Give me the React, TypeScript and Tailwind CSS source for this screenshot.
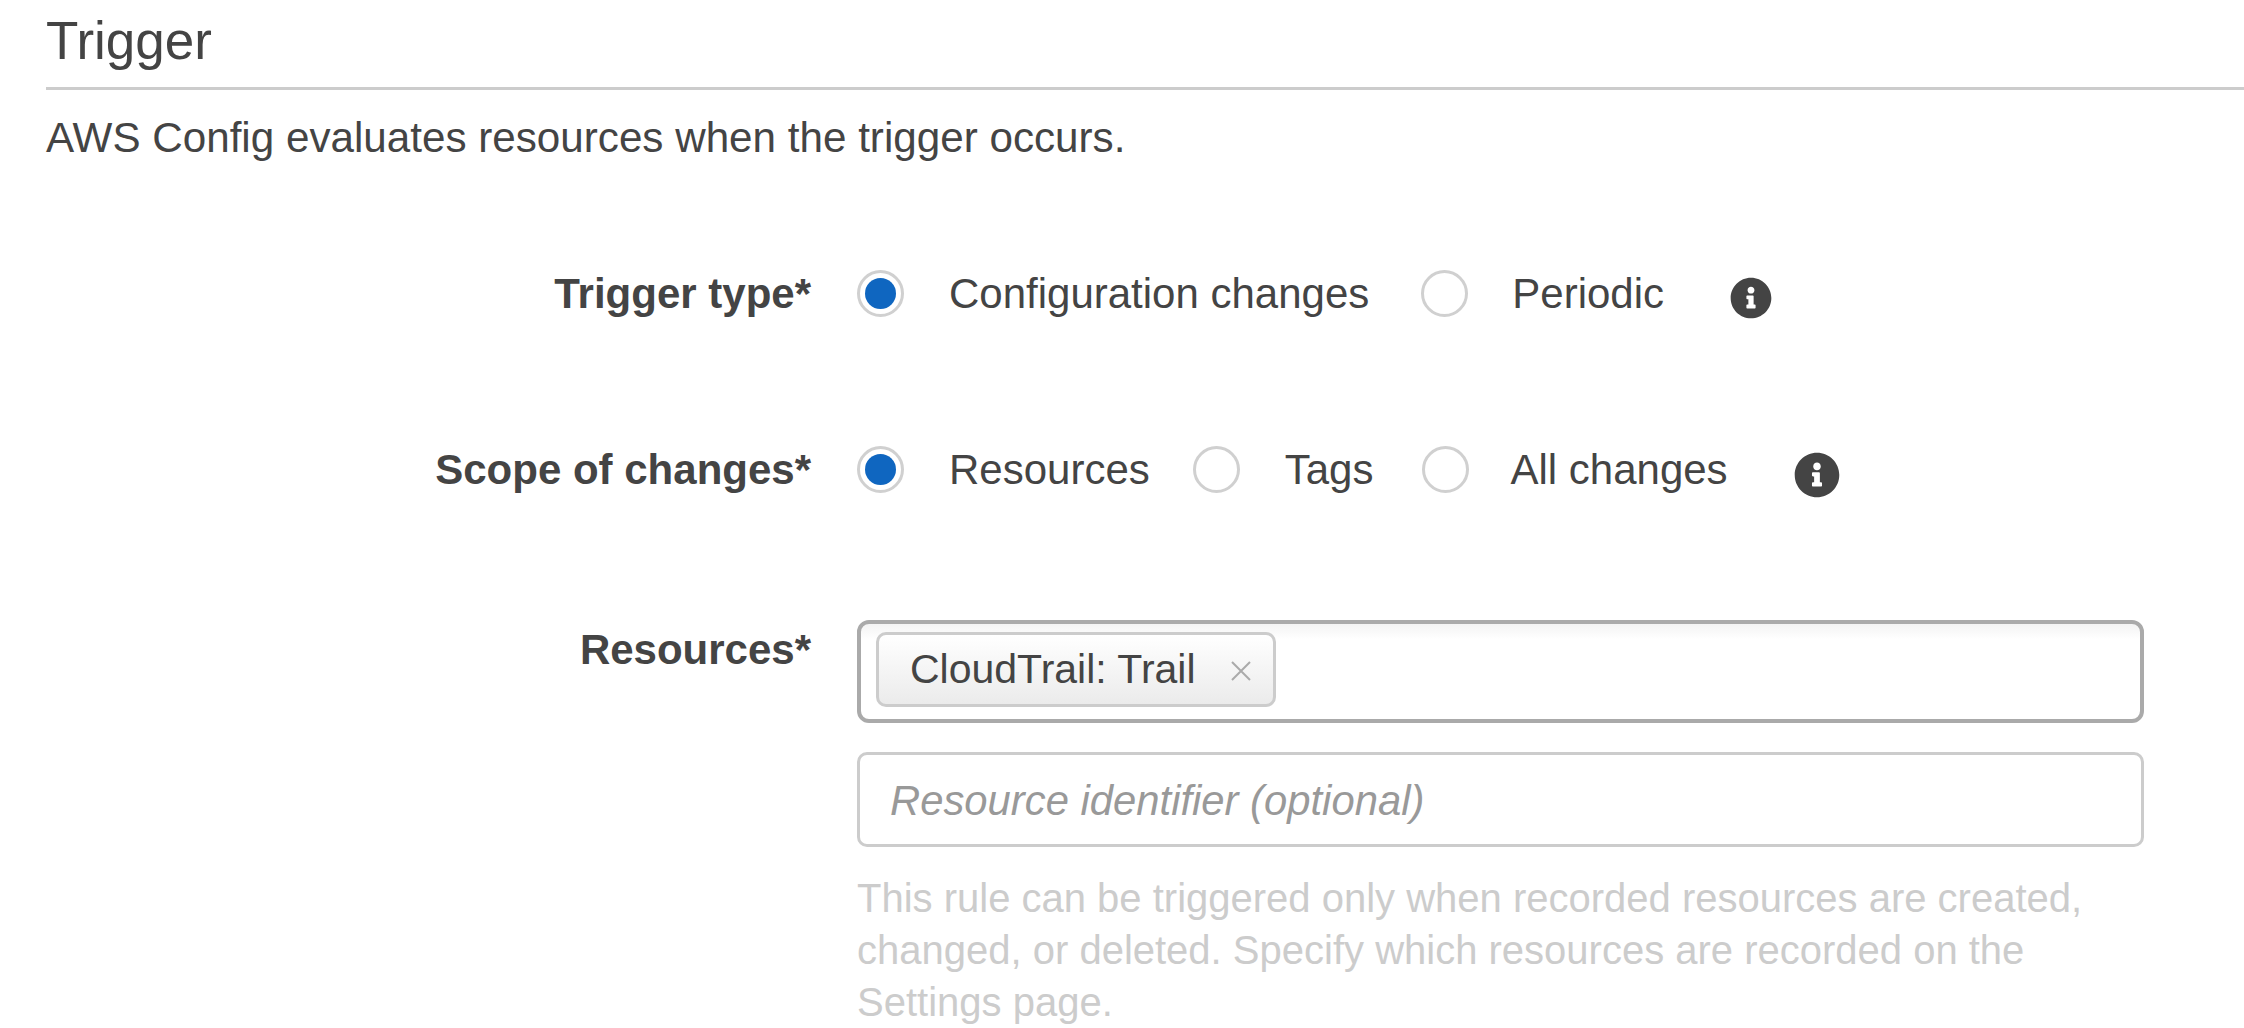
import { FaInfoCircle } from 'react-icons/fa'

function Radio({ label, checked = false, className = 'gap-[45px]' }: { label: string; checked?: boolean; className?: string }) {
  return (
    <label className={`flex items-center ${className}`}>
      <span className="flex h-[47px] w-[47px] shrink-0 items-center justify-center rounded-full border-[3px] border-[#d0d0d0] bg-white">
        {checked && <span className="h-[31px] w-[31px] rounded-full bg-[#0f66c0]" />}
      </span>
      <span className="text-[42px] leading-[47px] text-[#444]">{label}</span>
    </label>
  )
}

function FieldLabel({ children, className = '' }: { children: string; className?: string }) {
  return <div className={`w-[811px] shrink-0 text-right text-[42px] font-bold leading-[47px] text-[#444] ${className}`}>{children}</div>
}

export default function App() {
  return (
    <div className="h-[1028px] w-[2244px] overflow-hidden bg-white font-['Liberation_Sans',Arial,sans-serif]">
      <div className="pl-[46px] pt-[9px]">
        <h2 className="border-b-[3px] border-[#ccc] pb-[14px] text-[53px] leading-[64px] text-[#444]">Trigger</h2>
        <p className="mt-[24px] text-[42.2px] leading-[48px] text-[#444]">AWS Config evaluates resources when the trigger occurs.</p>
      </div>

      <div className="mt-[108px] flex h-[47px] items-center gap-[46px]">
        <FieldLabel>Trigger type*</FieldLabel>
        <div className="flex items-center gap-[52px]">
          <Radio label="Configuration changes" checked />
          <Radio label="Periodic" className="gap-[44px]" />
        </div>
        <FaInfoCircle className="ml-[20px] mt-[8px] h-[42px] w-[42px] text-[#444]" />
      </div>

      <div className="mt-[129px] flex h-[47px] items-center gap-[46px]">
        <FieldLabel>Scope of changes*</FieldLabel>
        <div className="flex items-center gap-[43px]">
          <Radio label="Resources" checked />
          <Radio label="Tags" />
          <Radio label="All changes" className="ml-[6px] gap-[41px]" />
        </div>
        <FaInfoCircle className="ml-[20px] mt-[10px] h-[46px] w-[46px] text-[#444]" />
      </div>

      <div className="mt-[127px] flex gap-[46px]">
        <FieldLabel className="mt-[6px]">Resources*</FieldLabel>
        <div className="w-[1287px]">
          <div className="flex h-[103px] items-start rounded-[12px] border-[4px] border-[#aaa] bg-gradient-to-b from-[#f3f3f3] to-white to-[16%] pl-[15px] pt-[8px]">
            <div className="flex h-[75px] w-[400px] items-center rounded-[10px] border-[3px] border-[#ccc] bg-gradient-to-b from-white to-[#ebebeb] pl-[31px]">
              <span className="text-[41px] leading-none text-[#444]">CloudTrail: Trail</span>
              <svg viewBox="0 0 22 22" className="ml-[34px] mt-[3px] h-[22px] w-[22px]" fill="none" stroke="#aaa" strokeWidth="2">
                <path d="M2 2 20 20M20 2 2 20" />
              </svg>
            </div>
          </div>
          <div className="mt-[29px] flex h-[95px] items-center rounded-[10px] border-[3px] border-[#ccc] pl-[30px]">
            <span className="mt-[2px] text-[41.8px] italic leading-none text-[#999]">Resource identifier (optional)</span>
          </div>
          <p className="mt-[25px] text-[40px] leading-[52px] text-[#ccc]">
            This rule can be triggered only when recorded resources are created,
            <br />
            changed, or deleted. Specify which resources are recorded on the
            <br />
            Settings page.
          </p>
        </div>
      </div>
    </div>
  )
}
